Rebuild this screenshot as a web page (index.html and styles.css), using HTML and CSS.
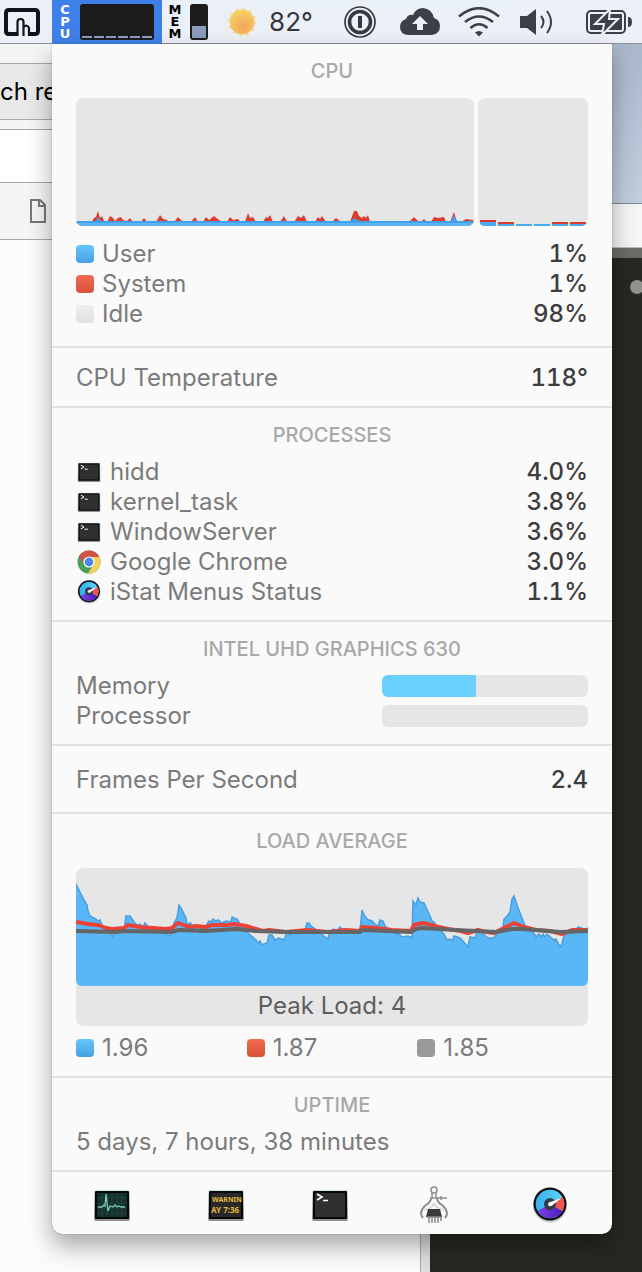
FILE: index.html
```html
<!DOCTYPE html>
<html lang="en">
<head>
<meta charset="utf-8">
<meta name="viewport" content="width=device-width, initial-scale=1">
<title>CPU</title>
<link rel="stylesheet" href="styles.css">
</head>
<body>
<svg class="defs" width="0" height="0" aria-hidden="true">
  <defs>
    <linearGradient id="dialBlue" x1="0" y1="0" x2="1" y2="0"><stop offset="0" stop-color="#35b0ee"/><stop offset="1" stop-color="#62d4f6"/></linearGradient>
    <linearGradient id="dialPurple" x1="0" y1="0" x2="1" y2="0"><stop offset="0" stop-color="#7d45e0"/><stop offset="1" stop-color="#4d18bd"/></linearGradient>
    <linearGradient id="frame" x1="0" y1="0" x2="0" y2="1"><stop offset="0" stop-color="#cfe3ec"/><stop offset="1" stop-color="#8c8c8c"/></linearGradient>
    <radialGradient id="sun" cx=".55" cy=".65" r=".6"><stop offset="0" stop-color="#f4a45e"/><stop offset="1" stop-color="#f5cf62"/></radialGradient>
    <symbol id="terminal" viewBox="0 0 36 32">
      <rect x="0" y="1" width="36" height="31" rx="2" fill="url(#frame)"/>
      <rect x="1" y="2" width="34" height="28" rx="1" fill="#080808"/>
      <rect x="3" y="4" width="30" height="24" fill="#303030"/>
      <path d="M5 5l5 3-5 3M11 11.500h5" fill="none" stroke="#fff" stroke-width="1.600"/>
    </symbol>
    <symbol id="dial" viewBox="0 0 34 36">
      <circle cx="17" cy="18.500" r="17" fill="#c9c9c9"/>
      <circle cx="17" cy="17" r="16.500" fill="#0d0f14"/>
      <circle cx="17" cy="17" r="14.300" fill="url(#dialBlue)"/>
      <path d="M17 17L4.600 24A14.300 14.300 0 0 0 29.400 24Z" fill="url(#dialPurple)"/>
      <path d="M17 17L29.400 24A14.300 14.300 0 0 0 29.400 10Z" fill="#f2544f"/>
      <circle cx="17" cy="17" r="6" fill="#333c49"/>
      <path d="M16 15.500L28.500 11 18.500 19Z" fill="#fff"/>
      <circle cx="17" cy="17.200" r="2" fill="#fff"/>
    </symbol>
  </defs>
</svg>

<div class="desktop" aria-hidden="true">
  <div class="browser">
    <div class="strip"></div>
    <div class="tab">ch re</div>
    <div class="strip thin"></div>
    <div class="address"></div>
    <div class="bookmarks">
      <svg width="18" height="26" viewBox="0 0 18 26"><path d="M2 2h9l5 5v17H2zM10 2v6h6" fill="none" stroke="#73777b" stroke-width="2"/></svg>
    </div>
  </div>
  <div class="editor">
    <div class="wallpaper"></div>
    <div class="titlebar"></div>
    <div class="tabline"></div>
    <span class="knob"></span>
  </div>
</div>

<header class="menubar">
  <button class="item gesture" aria-label="Gestures">
    <svg width="36" height="29" viewBox="0 0 36 29"><path d="M14 26H5q-3 0-3-3V5q0-3 3-3h26q3 0 3 3v18q0 3-3 3h-5" fill="none" stroke="#10131b" stroke-width="4"/><path d="M13.500 28V14q0-3 3-3t3 3v14M19.500 19q4-3 5.500 1v8" fill="none" stroke="#10131b" stroke-width="2.200"/></svg>
  </button>
  <button class="item cpu" aria-label="CPU">
    <span class="stack"><span>C</span><span>P</span><span>U</span></span>
    <svg width="74" height="36" viewBox="0 0 74 36"><rect width="74" height="36" rx="3" fill="#1c1c1d"/><path d="M2 33h10M14 33h10M26 33h10M38 33h10M50 33h10M62 33h10" stroke="#8e9dc0" stroke-width="2"/></svg>
  </button>
  <button class="item mem" aria-label="Memory">
    <span class="stack"><span>M</span><span>E</span><span>M</span></span>
    <svg width="18" height="36" viewBox="0 0 18 36"><rect width="18" height="36" rx="3" fill="#1c1c1d"/><path d="M2 22h14v12H2z" fill="#8c9abb"/></svg>
  </button>
  <button class="item weather">
    <svg width="30" height="30" viewBox="0 0 30 30"><circle cx="15" cy="15" r="13" fill="none" stroke="#f6dca0" stroke-width="3" stroke-dasharray="2.500 4.300"/><circle cx="15" cy="15" r="12.500" fill="url(#sun)"/></svg>
    <span>82°</span>
  </button>
  <button class="item password" aria-label="Password manager">
    <svg width="32" height="32" viewBox="0 0 32 32"><circle cx="16" cy="16" r="15" fill="none" stroke="#353941" stroke-width="1.700"/><circle cx="16" cy="16" r="10.500" fill="none" stroke="#353941" stroke-width="3.600"/><path d="M16 10v12" stroke="#353941" stroke-width="4"/></svg>
  </button>
  <button class="item cloud" aria-label="Backup">
    <svg width="40" height="28" viewBox="0 0 40 28"><path d="M8 27q-8-1-8-8 0-6 6-8 2-5 7-4 3-7 10-7 9 1 11 10 6 2 6 8 0 8-8 9z" fill="#3b4048"/><path d="M20 8l8 8h-5v6h-6v-6h-5z" fill="#eaeff8"/></svg>
  </button>
  <button class="item wifi" aria-label="Wi-Fi">
    <svg width="42" height="30" viewBox="0 0 42 30"><path d="M1 9.500Q21-7 41 9.500M7 15Q21 4 35 15M12.500 21Q21 13.500 29.500 21" fill="none" stroke="#3b4048" stroke-width="2.600"/><path d="M17 25.500q4-3 8 0l-4 4z" fill="#3b4048"/></svg>
  </button>
  <button class="item sound" aria-label="Volume">
    <svg width="34" height="26" viewBox="0 0 34 26"><path d="M0 7h7l9-7v26l-9-7H0z" fill="#3b4048"/><path d="M21 7q5 6 0 12M27 2q8 11 0 22" fill="none" stroke="#3b4048" stroke-width="2"/></svg>
  </button>
  <button class="item battery" aria-label="Battery">
    <svg width="46" height="26" viewBox="0 0 46 26"><rect x="1" y="2" width="38" height="22" rx="4" fill="none" stroke="#3b4048" stroke-width="2"/><rect x="4" y="5" width="32" height="16" rx="1" fill="#3b4048"/><path d="M42 8q4 0 4 5t-4 5z" fill="#3b4048"/><path d="M24 0L9 15h9l-2 11L32 10h-9z" fill="#3b4048" stroke="#eaeff8" stroke-width="2"/></svg>
  </button>
</header>

<main class="panel">
  <section class="group usage">
    <h2>CPU</h2>
    <div class="charts">
      <svg class="history" viewBox="0 0 398 128" preserveAspectRatio="none" role="img" aria-label="CPU history">
        <path d="M0 124H16L18 120 20 119 22 113 24 120 26 118 28 123 31 124 34 118 37 120 39 123 42 120 45 119 47 122 51 123 54 120 57 124H65L68 120 71 124H80L84 117 87 121 91 122 93 124H98L102 119 105 122 108 124H115L119 119 122 124H127L130 119 133 122 138 118 143 122 147 124H151L154 119 157 122 162 121 165 124H169L172 115 174 120 177 119 180 124H187L190 119 192 120 194 117 197 124H204L208 118 211 124H218L222 118 225 120 228 117 231 124H239L242 119 244 121 246 118 250 124H256L260 120 265 124H274L278 113H281L283 118 286 120 288 118 290 120 292 117 294 124H333L338 119 341 122 343 124H345L348 121 351 124H355L358 119 362 120 368 119 370 124H374L378 114 381 124H385L390 121 397 122 398 124V128H0z" fill="#dc3b2e"/>
        <path d="M0 123H20L22 119 25 123H275L278 120 284 123H375L378 117 381 123H398V128H0z" fill="#439fe6"/>
        <path d="M0 125H398V128H0z" fill="#5ab7f6"/>
      </svg>
      <svg class="cores" viewBox="0 0 110 128" preserveAspectRatio="none" role="img" aria-label="CPU cores">
        <path d="M2 123h16M20 125h16M74 125h16M92 125h16" stroke="#dc3b2e" stroke-width="2"/>
        <path d="M2 126h16" stroke="#4aa8ee" stroke-width="4"/>
        <path d="M20 127h16M38 127h16M56 127h16M74 127h16M92 127h16" stroke="#4aa8ee" stroke-width="2"/>
      </svg>
    </div>
    <dl class="rows">
      <div class="row"><dt><i class="swatch blue"></i>User</dt><dd>1%</dd></div>
      <div class="row"><dt><i class="swatch red"></i>System</dt><dd>1%</dd></div>
      <div class="row"><dt><i class="swatch idle"></i>Idle</dt><dd>98%</dd></div>
    </dl>
  </section>

  <section class="group">
    <dl class="rows"><div class="row"><dt>CPU Temperature</dt><dd>118°</dd></div></dl>
  </section>

  <section class="group">
    <h2>PROCESSES</h2>
    <table class="processes">
      <tbody>
        <tr><th scope="row"><svg class="app"><use href="#terminal"/></svg>hidd</th><td>4.0%</td></tr>
        <tr><th scope="row"><svg class="app"><use href="#terminal"/></svg>kernel_task</th><td>3.8%</td></tr>
        <tr><th scope="row"><svg class="app"><use href="#terminal"/></svg>WindowServer</th><td>3.6%</td></tr>
        <tr><th scope="row"><svg class="app round" viewBox="0 0 24 24"><circle cx="12" cy="12" r="11.500" fill="#4b9f5b"/><path d="M12 12L2 6.300A11.500 11.500 0 0 1 22 6.300V7H12z" fill="#cf5246"/><path d="M12 12l4.500 2.500L11 23.500A11.500 11.500 0 0 0 22.300 7H12z" fill="#f6cf59"/><path d="M2 6.300L7.500 15 12 12V7z" fill="#cf5246"/><circle cx="12" cy="12" r="5.600" fill="#fff"/><circle cx="12" cy="12" r="4.400" fill="#4d86ec"/></svg>Google Chrome</th><td>3.0%</td></tr>
        <tr><th scope="row"><svg class="app round"><use href="#dial"/></svg>iStat Menus Status</th><td>1.1%</td></tr>
      </tbody>
    </table>
  </section>

  <section class="group">
    <h2>INTEL UHD GRAPHICS 630</h2>
    <div class="rows graphics">
      <div class="row"><label for="gpu-memory">Memory</label><progress id="gpu-memory" max="206" value="94"></progress></div>
      <div class="row"><label for="gpu-processor">Processor</label><progress id="gpu-processor" max="206" value="0"></progress></div>
    </div>
  </section>

  <section class="group roomy">
    <dl class="rows"><div class="row"><dt>Frames Per Second</dt><dd>2.4</dd></div></dl>
  </section>

  <section class="group load">
    <h2>LOAD AVERAGE</h2>
    <figure class="load-chart">
      <svg viewBox="0 0 512 118" preserveAspectRatio="none" role="img" aria-label="Load average history">
        <path d="M-2 12L0 16 3 22 8 32 11 37 12 43 14 48 16 49 20 51 22 53 24 52 27 60 34 64 37 69 38 65 48 62 50 48 54 48 58 54 62 58 64 56 67 59 69 55 72 59 85 61 88 65 94 68 96 62 98 55 101 50 103 37 105 40 110 50 111 57 114 55 118 58 125 61 130 58 133 53 135 54 137 51 140 53 142 52 146 55 150 53 155 54 156 49 161 51 164 56 168 59 172 65 180 72 182 75 184 73 186 77 188 76 191 75 193 67 196 67 199 72 203 70 208 72 210 67 212 65 215 67 217 63 229 62 231 55 233 55 235 58 238 60 245 66 252 71 254 63 258 61 261 63 264 59 268 62 276 65 284 63 286 42 288 47 291 51 293 52 296 53 299 56 302 58 304 52 307 53 309 58 311 60 316 62 320 66 322 65 326 69 332 68 336 70 337 33 340 37 342 30 344 34 348 35 354 48 356 53 358 54 362 60 368 66 371 72 374 71 376 73 378 68 384 70 386 72 392 79 394 69 399 70 402 61 407 66 412 70 418 70 422 64 427 60 428 51 432 47 434 44 436 31 438 28 439 31 441 37 446 50 450 60 454 63 458 65 460 69 463 66 465 69 467 66 469 69 471 66 478 72 480 71 484 79 486 76 488 67 494 65 497 61 500 62 502 59 508 61 514 60V120H-2z" fill="#5ab7f6" stroke="#489fe0" stroke-width="1.500"/>
        <path d="M0 54L12 56 22 57 30 60 36 61 48 60 52 57 64 59 90 61 96 60 102 55 110 58 116 59 120 58 130 59 136 57 152 57 158 56 170 58 180 61 187 63 193 62 210 64 231 62 252 64 270 62 284 63 286 59 300 60 316 62 335 63 338 57 346 55 352 56 362 59 372 61 385 63 392 65 402 62 410 64 418 65 424 62 432 58 438 55 448 59 460 62 474 63 486 66 496 62 512 62" fill="none" stroke="#ec4135" stroke-width="4" stroke-linejoin="round"/>
        <path d="M0 63L40 64 48 63 95 64 103 62 130 63 160 61 180 63 210 64 284 64 286 62 335 64 340 61 346 60 380 62 420 64 436 61 446 61 460 62 484 64 512 63" fill="none" stroke="#656565" stroke-width="4" stroke-linejoin="round"/>
      </svg>
      <figcaption>Peak Load: 4</figcaption>
    </figure>
    <ul class="legend">
      <li><i class="swatch blue"></i>1.96</li>
      <li><i class="swatch red"></i>1.87</li>
      <li><i class="swatch gray"></i>1.85</li>
    </ul>
  </section>

  <section class="group">
    <h2>UPTIME</h2>
    <p>5 days, 7 hours, 38 minutes</p>
  </section>

  <nav class="launcher" aria-label="Utilities">
    <button aria-label="Activity Monitor"><svg width="36" height="32" viewBox="0 0 36 32"><rect y="1" width="36" height="31" rx="2" fill="url(#frame)"/><rect x="1" y="2" width="34" height="28" rx="1" fill="#080808"/><rect x="3" y="4" width="30" height="24" fill="#15302c"/><path d="M3 9h30M3 14h30M3 19h30M3 24h30M8 4v24M13 4v24M18 4v24M23 4v24M28 4v24" stroke="#25463f" stroke-width=".8"/><path d="M4 18h4l2-2 1 1 1-12 2 17 2-5 3 1 2-2 2 2 2-1 2 1h4" fill="none" stroke="#78cbb7" stroke-width="1.300"/></svg></button>
    <button aria-label="Console"><svg width="36" height="32" viewBox="0 0 36 32"><rect y="1" width="36" height="31" rx="2" fill="url(#frame)"/><rect x="1" y="2" width="34" height="28" rx="1" fill="#080808"/><rect x="3" y="4" width="30" height="24" fill="#292929"/><text class="console-text" x="4" y="13">WARNIN</text><text class="console-text" x="3" y="24">AY 7:36</text></svg></button>
    <button aria-label="Terminal"><svg width="36" height="32"><use href="#terminal"/></svg></button>
    <button aria-label="System Information"><svg width="30" height="38" viewBox="0 0 30 38"><g fill="none" stroke="#8e8e8e"><circle cx="15" cy="4" r="3" stroke-width="1.500"/><path d="M13 7v5h4V7M11 12h17M22 10v4" stroke-width="1.500"/><path d="M12 12q0 4-5 7-8 7-3 13M18 12q0 4 5 7 8 7 3 13" stroke-width="2"/><path d="M5 24q9-2 10-7 1 5 10 7" stroke="#ddd" stroke-width="2"/></g><path d="M9 23h12l2 8H7z" fill="#393939"/><path d="M8 31h14M10 31v6M13 31v6M16 31v6M19 31v6M22 31v4" stroke="#888" stroke-width="1.500"/></svg></button>
    <button aria-label="iStat Menus"><svg width="34" height="36"><use href="#dial"/></svg></button>
  </nav>
</main>
</body>
</html>
```
FILE: styles.css
```css
* { box-sizing: border-box; }

body {
  margin: 0;
  min-height: 100vh;
  position: relative;
  overflow-x: hidden;
  background: #282822;
  color: #7b7b7b;
  font: 24px/30px Inter, "Liberation Sans", sans-serif;
}

h2, p, dl, dd, ul, figure { margin: 0; padding: 0; }
button { border: 0; padding: 0; background: none; color: inherit; font: inherit; }
svg { display: block; flex: none; }
.defs { position: absolute; }

/* Windows behind the menu */
.desktop { position: absolute; inset: 0; overflow: hidden; }
.browser {
  position: absolute;
  inset: 44px auto 0 0;
  width: 430px;
  background: linear-gradient(to right, #fcfcfc 420px, #a9a9a9 420px, #a9a9a9 421px, #dedede 421px);
}
.browser > div { border-bottom: 1px solid #a8a8a8; background: #f5f5f5; }
.browser .strip { height: 20px; }
.browser .tab { height: 56px; padding-top: 13px; background: #e9e9e9; color: #000; }
.browser .thin { height: 10px; }
.browser .address { height: 53px; background: #fff; }
.browser .bookmarks { height: 57px; padding: 15px 0 0 29px; }
.editor { position: absolute; inset: 44px 0 0 430px; background: #282822; }
.wallpaper { height: 160px; background: linear-gradient(#a9b7ca, #c1cee0); border-bottom: 1px solid #7c8796; }
.titlebar { height: 44px; background: #f6f6f6; border-bottom: 1px solid #bbb; }
.tabline { height: 10px; background: #6b6b67; }
.knob { position: absolute; top: 236px; left: 200px; width: 14px; height: 14px; border-radius: 50%; background: #92928f; }

/* Menu bar */
.menubar {
  position: relative;
  display: flex;
  height: 44px;
  background: linear-gradient(#eaf0fa, #edf0f6);
  box-shadow: inset 0 -1px #8b929e;
  color: #34373d;
}
.item { display: flex; flex: none; align-items: center; justify-content: center; }
.gesture { width: 52px; padding-right: 8px; }
.cpu, .mem { justify-content: flex-start; gap: 7px; padding-left: 5px; }
.cpu { width: 110px; background: #3f7fe8; color: #fff; }
.mem { width: 54px; color: #000; }
.weather { width: 116px; padding-right: 8px; gap: 12px; font-size: 26px; }
.password { width: 56px; }
.cloud { width: 64px; }
.wifi { width: 54px; }
.sound { width: 62px; }
.battery { width: 82px; }
.stack { display: flex; flex-direction: column; width: 16px; align-items: center; font: 700 13px/12px "DejaVu Sans", sans-serif; }

/* Drop-down panel */
.panel {
  position: relative;
  margin: 0 30px 38px 52px;
  background: #fafafa;
  border-radius: 0 0 10px 10px;
  box-shadow: 0 0 1px rgba(0, 0, 0, .6), 0 12px 24px rgba(0, 0, 0, .34);
}
.group { padding: 12px 24px 13px; border-bottom: 2px solid #e0e0e0; }
.group:not(:has(h2)) { padding-top: 15px; }
.group.roomy { padding: 19px 24px 17px; }
.group.usage { padding-bottom: 17px; }
h2 { margin-bottom: 7px; color: #a8a8a8; font-size: 20px; font-weight: 500; line-height: 30px; text-align: center; }
.usage h2, .load h2 { margin-bottom: 12px; }

.charts { display: grid; grid-template-columns: 398fr 110fr; gap: 4px; height: 128px; margin-bottom: 13px; }
.charts svg { width: 100%; height: 100%; min-width: 0; border-radius: 7px; background: #e6e6e6; overflow: hidden; }

.row { display: flex; align-items: center; justify-content: space-between; height: 30px; }
dt, .legend li { display: flex; align-items: center; gap: 8px; }
dd, td { color: #3d3d3d; font-weight: 500; font-variant-numeric: tabular-nums; text-align: right; }
.swatch { width: 18px; height: 18px; border-radius: 4px; }
.blue { background: linear-gradient(#64c8fb, #469fe3); }
.red { background: linear-gradient(#f16c52, #d8513a); }
.idle { background: linear-gradient(#eee, #e0e0e0); }
.gray { background: #999; }

.processes { width: 100%; border-collapse: collapse; }
.processes th, .processes td { height: 30px; padding: 0; }
.processes th { display: flex; align-items: center; gap: 8px; font-weight: 400; }
.app { width: 26px; height: 20px; }
.app.round { height: 24px; }

progress { width: 206px; height: 22px; border: 0; border-radius: 6px; overflow: hidden; appearance: none; background: #e6e6e6; }
progress::-webkit-progress-bar { background: #e6e6e6; }
progress::-webkit-progress-value { background: #6bcffb; }

.load-chart { margin-bottom: 7px; border-radius: 7px; background: #e6e6e6; overflow: hidden; }
.load-chart svg { width: 100%; height: 118px; border-radius: 0 0 6px 6px; overflow: hidden; }
.load-chart figcaption { height: 40px; line-height: 40px; color: #5e5e5e; text-align: center; }
.legend { display: grid; grid-template-columns: repeat(3, 1fr); list-style: none; }

.launcher { display: grid; grid-template-columns: 120fr 108fr 100fr 108fr 124fr; height: 62px; padding-top: 4px; }
.launcher button { display: grid; place-items: center; }
.console-text { fill: #e5b93a; font: 700 8px "Noto Sans", sans-serif; }
.console-text:first-of-type { font-size: 7px; }
```
